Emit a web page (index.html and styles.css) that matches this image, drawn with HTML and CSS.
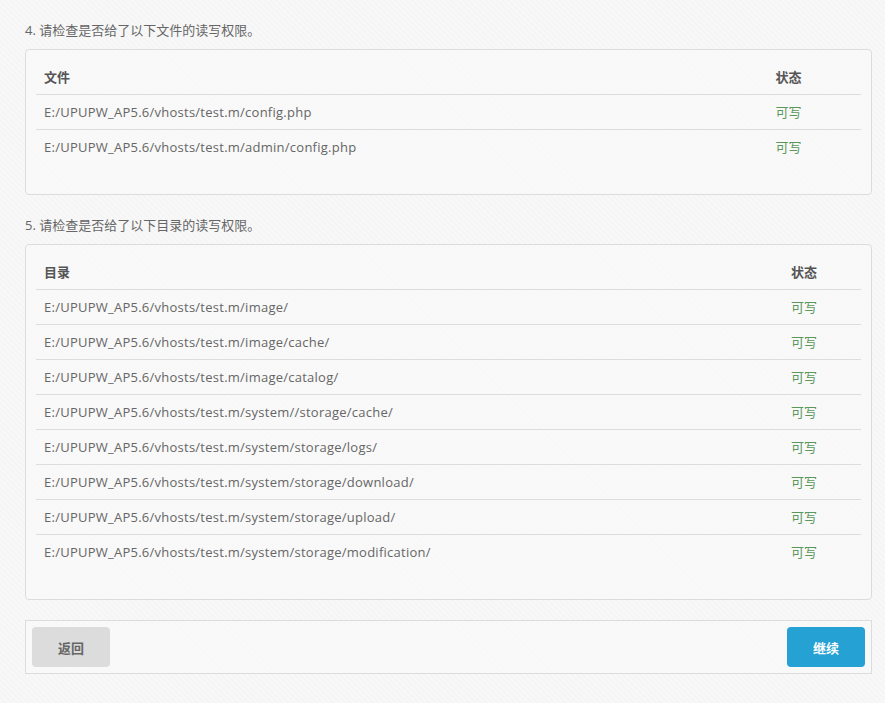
FILE: index.html
```html
<!DOCTYPE html>
<html lang="zh-CN">
<head>
<meta charset="utf-8">
<title>安装检查</title>
<link rel="stylesheet" href="styles.css">
</head>
<body>
<div class="page">
  <p class="step-title">4. 请检查是否给了以下文件的读写权限。</p>
  <fieldset class="panel">
    <table class="perm-table">
      <thead>
        <tr><th>文件</th><th>状态</th></tr>
      </thead>
      <tbody>
        <tr><td>E:/UPUPW_AP5.6/vhosts/test.m/config.php</td><td class="ok">可写</td></tr>
        <tr><td>E:/UPUPW_AP5.6/vhosts/test.m/admin/config.php</td><td class="ok">可写</td></tr>
      </tbody>
    </table>
  </fieldset>
  <p class="step-title step-next">5. 请检查是否给了以下目录的读写权限。</p>
  <fieldset class="panel">
    <table class="perm-table">
      <thead>
        <tr><th>目录</th><th>状态</th></tr>
      </thead>
      <tbody>
        <tr><td>E:/UPUPW_AP5.6/vhosts/test.m/image/</td><td class="ok">可写</td></tr>
        <tr><td>E:/UPUPW_AP5.6/vhosts/test.m/image/cache/</td><td class="ok">可写</td></tr>
        <tr><td>E:/UPUPW_AP5.6/vhosts/test.m/image/catalog/</td><td class="ok">可写</td></tr>
        <tr><td>E:/UPUPW_AP5.6/vhosts/test.m/system//storage/cache/</td><td class="ok">可写</td></tr>
        <tr><td>E:/UPUPW_AP5.6/vhosts/test.m/system/storage/logs/</td><td class="ok">可写</td></tr>
        <tr><td>E:/UPUPW_AP5.6/vhosts/test.m/system/storage/download/</td><td class="ok">可写</td></tr>
        <tr><td>E:/UPUPW_AP5.6/vhosts/test.m/system/storage/upload/</td><td class="ok">可写</td></tr>
        <tr><td>E:/UPUPW_AP5.6/vhosts/test.m/system/storage/modification/</td><td class="ok">可写</td></tr>
      </tbody>
    </table>
  </fieldset>
  <div class="actions">
    <a class="btn btn-back" href="#">返回</a>
    <a class="btn btn-next" href="#">继续</a>
  </div>
</div>
</body>
</html>
```
FILE: styles.css
```css
html, body {
  margin: 0;
  padding: 0;
}
body {
  background-color: #f6f6f6;
  background-image: repeating-linear-gradient(45deg, #f5f5f5 0, #f5f5f5 2px, #f8f8f8 2px, #f8f8f8 4px);
  font-family: "Open Sans", "Noto Sans CJK SC", sans-serif;
  font-size: 13px;
  color: #666;
  min-height: 703px;
}
.page {
  padding: 20px 13px 30px 25px;
}
.step-title {
  margin: 0 0 9px 0;
  line-height: 20px;
  color: #666;
}
.step-next {
  margin-top: 20px;
}
.panel {
  margin: 0;
  padding: 10px;
  border: 1px solid #dcdcdc;
  border-radius: 4px;
  background: rgba(250, 250, 250, 0.6);
  min-width: 0;
}
.perm-table {
  width: 100%;
  border-collapse: collapse;
  margin-bottom: 20px;
}
.perm-table th,
.perm-table td {
  padding: 8px;
  line-height: 18px;
  text-align: left;
  vertical-align: top;
}
.perm-table th {
  font-weight: bold;
  color: #555;
  border-bottom: 1px solid #ddd;
}
.perm-table td {
  border-bottom: 1px solid #ddd;
  letter-spacing: 0.25px;
}
.perm-table tbody tr:last-child td {
  border-bottom: 0;
}
.perm-table td.ok {
  color: #5a975a;
  letter-spacing: 0;
}
.actions {
  margin-top: 20px;
  padding: 6px;
  border: 1px solid #dcdcdc;
  display: flex;
  justify-content: space-between;
  background: rgba(250, 250, 250, 0.6);
}
.btn {
  display: flex;
  align-items: center;
  justify-content: center;
  width: 78px;
  height: 40px;
  border-radius: 4px;
  font-weight: bold;
  text-decoration: none;
  font-size: 13px;
}
.btn-back {
  background: #dcdcdc;
  color: #666;
}
.btn-next {
  background: #25a1d3;
  color: #fff;
}
```
